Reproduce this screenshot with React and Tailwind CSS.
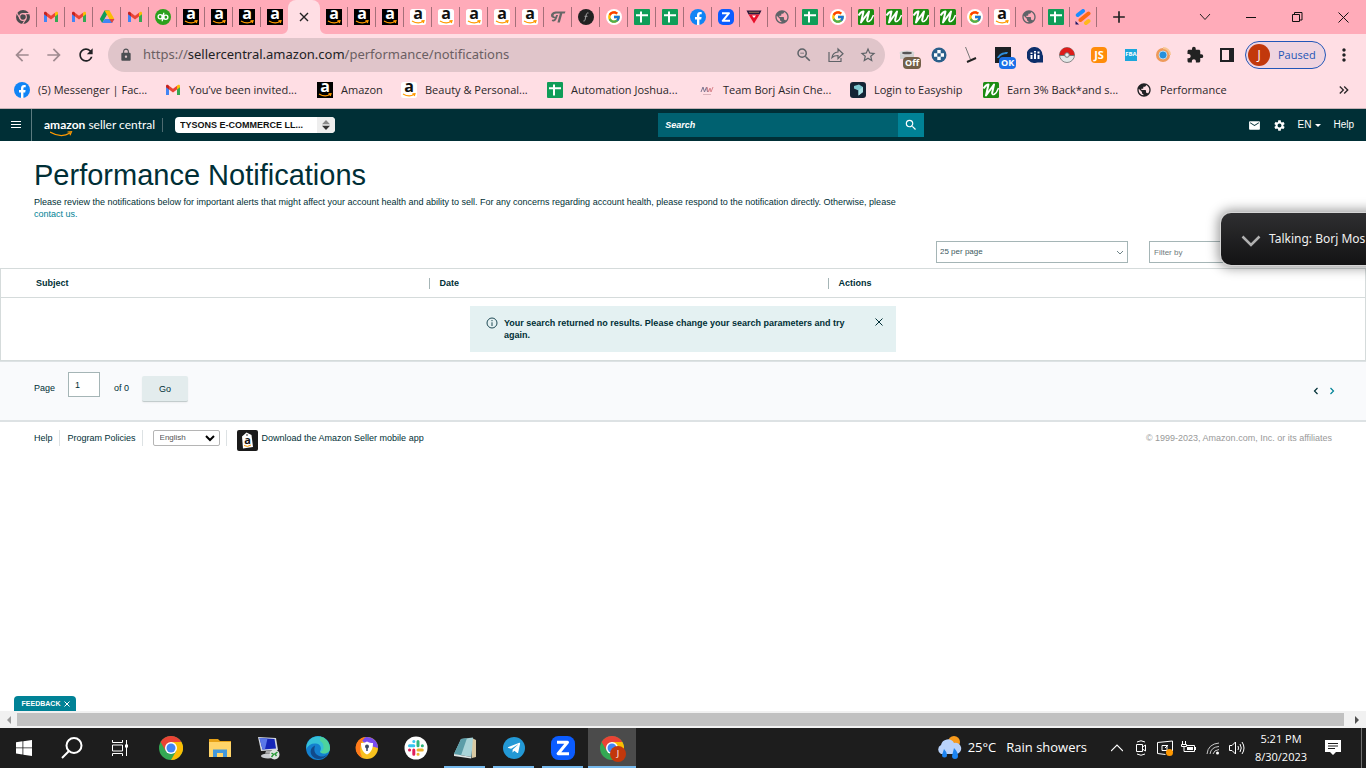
import React from 'react';
import { FcGoogle } from 'react-icons/fc';
import { FaTelegramPlane } from 'react-icons/fa';
import {
  MdLock,
  MdRefresh,
  MdArrowBack,
  MdArrowForward,
  MdStarBorder,
  MdExtension,
  MdMoreVert,
  MdSearch,
  MdSettings,
  MdEmail,
  MdAdd,
  MdPublic,
  MdOutlineZoomOut,
  MdKeyboardDoubleArrowRight,
} from 'react-icons/md';

/* ---------- Brand icons ---------- */

const AmazonIcon = ({ dark }) => (
  <svg viewBox="0 0 16 16" className="w-4 h-4 shrink-0 overflow-visible" aria-hidden="true">
    <rect width="16" height="16" rx={dark ? 0 : 2.5} fill={dark ? '#000' : '#fff'} />
    <text x="8" y="10.4" textAnchor="middle" fontSize="16" fontWeight="700" fontFamily="Open Sans" fill={dark ? '#fff' : '#111'}>
      a
    </text>
    <path d="M2 12q6 3.600 11 .6M11.400 11.800l2.600-.1-.7 2.300" fill="none" stroke="#f90" strokeWidth="1.200" />
  </svg>
);

const GmailIcon = () => (
  <svg viewBox="0 0 16 16" className="w-4 h-4 shrink-0" aria-hidden="true">
    <path d="M1 4v9h3V6.5z" fill="#4285f4" />
    <path d="M15 4v9h-3V6.5z" fill="#34a853" />
    <path d="M12 3.7v3.8l3-2.3V4c0-1.300-1.400-1.700-2.200-1z" fill="#fbbc04" />
    <path d="M1 4v1.200l3 2.300V3.700L3.200 3C2.400 2.300 1 2.700 1 4z" fill="#c5221f" />
    <path d="M4 3.700 8 6.700l4-3v3.800l-4 3-4-3z" fill="#ea4335" />
  </svg>
);

const DriveIcon = () => (
  <svg viewBox="0 0 16 16" className="w-4 h-4" aria-hidden="true">
    <path d="M5.500 1.500h5L8 5.800 3.200 14 .8 10z" fill="#0f9d58" />
    <path d="M5.500 1.500h5L15.300 10h-5z" fill="#fbbc04" />
    <path d="M5.700 10h9.600L13 14H3.200z" fill="#4285f4" />
    <path d="M10.300 10h5L13 14z" fill="#ea4335" />
    <path d="M8 6.200 10.200 10H5.800z" fill="#ffabb9" />
  </svg>
);

const QuickBooksIcon = () => (
  <svg viewBox="0 0 16 16" className="w-4 h-4" aria-hidden="true">
    <circle cx="8" cy="8" r="8" fill="#2ca01c" />
    <g fill="none" stroke="#fff" strokeWidth="1.300">
      <circle cx="5.200" cy="7.800" r="2.100" />
      <circle cx="10.800" cy="8.200" r="2.100" />
      <path d="M7.300 5.500v6.700M8.700 10.500V3.800" />
    </g>
  </svg>
);

const ChromeIcon = ({ size = 'w-4 h-4' }) => (
  <svg viewBox="0 0 24 24" className={size} aria-hidden="true">
    <circle cx="12" cy="12" r="12" fill="#34a853" />
    <path d="M1.600 6A12 12 0 0 1 22.400 6H12L6.800 15z" fill="#ea4335" />
    <path d="M22.400 6A12 12 0 0 1 12 24l5.200-9L12 6z" fill="#fbbc04" />
    <circle cx="12" cy="12" r="6" fill="#fff" />
    <circle cx="12" cy="12" r="4.500" fill="#4285f4" />
  </svg>
);

const ChromeGrayIcon = () => (
  <svg viewBox="0 0 24 24" className="w-4 h-4" aria-hidden="true">
    <circle cx="12" cy="12" r="10.500" fill="#4a4a4d" />
    <g stroke="#ffabb9" strokeWidth="1.700" fill="none">
      <circle cx="12" cy="12" r="5" />
      <path d="M12 7h10M7.700 14.500 2.700 6M16.300 14.500l-5 8.500" />
    </g>
    <circle cx="12" cy="12" r="3" fill="#4a4a4d" />
  </svg>
);

const SheetIcon = () => (
  <svg viewBox="0 0 16 16" className="w-4 h-4 shrink-0" aria-hidden="true">
    <rect width="16" height="16" rx="1" fill="#0f9d58" />
    <path d="M2 6.300h12M7 2.500v11" stroke="#fff" strokeWidth="2" />
  </svg>
);

const FacebookIcon = () => (
  <svg viewBox="0 0 16 16" className="w-4 h-4 shrink-0" aria-hidden="true">
    <circle cx="8" cy="8" r="8" fill="#1184f5" />
    <path d="M7 16v-5.500H5V8h2V6.300C7 4.200 8.200 3 10.100 3l1.600.1v2.100h-1.100c-.9 0-1.200.5-1.200 1.200V8h2.200l-.4 2.500H9.400V16z" fill="#fff" />
  </svg>
);

const ZoomIcon = ({ size = 'w-4 h-4' }) => (
  <svg viewBox="0 0 16 16" className={size} aria-hidden="true">
    <rect width="16" height="16" rx="5" fill="#0b5cff" />
    <path d="M4 4.200h7L4.700 11.800H12" fill="none" stroke="#fff" strokeWidth="2" strokeLinejoin="round" />
  </svg>
);

const GoogleTabIcon = () => (
  <span className="w-4 h-4 rounded-full bg-white flex items-center justify-center">
    <FcGoogle className="w-3.5 h-3.5" />
  </span>
);

const SwooshIcon = () => (
  <svg viewBox="0 0 16 16" className="w-4 h-4" aria-hidden="true">
    <path d="M7 2.500h8.500l-.8 2h-2.400l-2.500 9H7.400l2.500-9H6.500c-1.700 0-3 .8-3 2 0 1 .9 1.300 2 1.300l.6-1.800h2L6.800 9.500c-1 2.500-3 3.500-5 2.500l.4-1.500c1.200.5 2.200 0 2.700-1.200C2.700 9.300 1 8.300 1 6.500c0-2.500 2.600-4 6-4z" fill="#666" />
  </svg>
);

const CursiveIcon = () => (
  <svg viewBox="0 0 16 16" className="w-4 h-4" aria-hidden="true">
    <circle cx="8" cy="8" r="8" fill="#222" />
    <path d="M10.500 4c-1.400-.4-2 .6-2.300 2L7 11c-.3 1-1 1.300-1.600.9M6.500 7.300h3" fill="none" stroke="#aaa" strokeWidth=".9" />
  </svg>
);

const ShieldIcon = () => (
  <svg viewBox="0 0 16 16" className="w-4 h-4" aria-hidden="true">
    <path d="M.5 1.500h15l-2 4h-11z" fill="#2b1a3d" />
    <path d="M2.500 5.500h11L8 14.500z" fill="#e8102a" />
    <path d="M6 6.500h4L8 9z" fill="#fff" />
    <path d="M3 3.300h10" stroke="#b08a5a" strokeWidth=".8" />
  </svg>
);

const GreenNIcon = () => (
  <svg viewBox="0 0 16 16" className="w-4 h-4 shrink-0" aria-hidden="true">
    <rect width="16" height="16" rx="1.500" fill="#1c8c12" />
    <path d="M.5 6.500C2 4 3.500 2.500 5.500 2.500L3 13.500 11 2.500 9 11.500" fill="none" stroke="#fff" strokeWidth="2" strokeLinejoin="round" />
    <path d="M9 11c0 3 4 2 6.500-5" fill="none" stroke="#fff" strokeWidth="1.500" />
  </svg>
);

const JungleIcon = () => (
  <svg viewBox="0 0 16 16" className="w-4 h-4" aria-hidden="true">
    <g strokeLinecap="round" strokeWidth="4">
      <path d="M2.800 6 8 2" stroke="#1a8dff" />
      <path d="M5.500 11 13.500 4.500" stroke="#ff6a13" />
      <path d="M11 14 13.500 12" stroke="#ffb81c" />
    </g>
    <path d="M.5 12 4 15.500H.5z" fill="#1b1464" />
  </svg>
);

const GlobeIcon = ({ tone = 'text-[#5f6368]' }) => <MdPublic className={`w-4 h-4 shrink-0 ${tone}`} />;

const TeamIcon = () => (
  <svg viewBox="0 0 16 16" className="w-4 h-4 shrink-0" aria-hidden="true">
    <path d="M2 10 4 5l1.500 5L7.500 5l1 5" fill="none" stroke="#7d7590" strokeWidth="1" />
    <path d="m8 5 1.500 5L11 6l1 4 2-5" fill="none" stroke="#d9848c" strokeWidth="1" />
    <path d="M4 12.500h8" stroke="#dbb4bb" />
  </svg>
);

const EasyshipIcon = () => (
  <svg viewBox="0 0 16 16" className="w-4 h-4 shrink-0" aria-hidden="true">
    <rect width="16" height="16" rx="3" fill="#152536" />
    <path d="m4 4 5-1.500L13 5v5l-4.500 3.500V8.500L4 6.500z" fill="#7fc9d2" />
    <path d="m8.500 8.500 4.500-3.500v5l-4.500 3.500z" fill="#a9e0e4" />
  </svg>
);

/* ---------- Tab strip ---------- */

const A = () => <AmazonIcon dark />;
const W = () => <AmazonIcon />;

const tabsBefore = [ChromeGrayIcon, GmailIcon, GmailIcon, DriveIcon, GmailIcon, QuickBooksIcon, A, A, A, A];
const tabsAfter = [
  A, A, A, W, W, W, W, W, SwooshIcon, CursiveIcon, GoogleTabIcon, SheetIcon, SheetIcon, FacebookIcon,
  ZoomIcon, ShieldIcon, GlobeIcon, SheetIcon, GoogleTabIcon, GreenNIcon, GreenNIcon,
];
const tabsNarrow = [GreenNIcon, GreenNIcon, GoogleTabIcon, W, GlobeIcon, SheetIcon, JungleIcon];

const Tab = ({ icon: Icon, narrow, last }) => (
  <div className={`${narrow ? 'w-[27px]' : 'w-7'} h-5 flex items-center justify-center border-r ${last ? 'border-transparent' : 'border-[#a46f79]'}`}>
    <Icon />
  </div>
);

const TabStrip = () => (
  <div className="h-[34px] bg-[#ffabb9] flex items-center pl-[9px]">
    {tabsBefore.map((icon, i) => (
      <Tab key={i} icon={icon} last={i === tabsBefore.length - 1} />
    ))}
    <div className="relative w-8 h-full -ml-px bg-[#ffdee4] rounded-t-lg flex items-center justify-center">
      <svg viewBox="0 0 6 6" className="absolute -left-1.5 bottom-0 w-1.5 h-1.5" aria-hidden="true">
        <path d="M6 0v6H0a6 6 0 0 0 6-6z" fill="#ffdee4" />
      </svg>
      <svg viewBox="0 0 6 6" className="absolute -right-1.5 bottom-0 w-1.5 h-1.5" aria-hidden="true">
        <path d="M0 0v6h6a6 6 0 0 1-6-6z" fill="#ffdee4" />
      </svg>
      <button aria-label="Close tab">
        <svg viewBox="0 0 10 10" className="w-2.5 h-2.5" aria-hidden="true">
          <path d="m1 1 8 8M9 1 1 9" stroke="#222" strokeWidth="1.400" />
        </svg>
      </button>
    </div>
    {tabsAfter.map((icon, i) => (
      <Tab key={i} icon={icon} />
    ))}
    {tabsNarrow.map((icon, i) => (
      <Tab key={i} icon={icon} narrow />
    ))}
    <button aria-label="New tab" className="ml-3">
      <MdAdd className="w-5 h-5 text-[#222]" />
    </button>
    <div className="ml-auto h-7 flex items-center">
      <button aria-label="Search tabs" className="w-[46px] flex justify-center">
        <svg viewBox="0 0 12 12" className="w-3 h-3" fill="none" stroke="#222">
          <path d="m1 3 5 5.500L11 3" />
        </svg>
      </button>
      <button aria-label="Minimize" className="w-[46px] flex justify-center">
        <svg viewBox="0 0 10 10" className="w-2.5 h-2.5" stroke="#111">
          <path d="M0 5.500h10" />
        </svg>
      </button>
      <button aria-label="Restore" className="w-[46px] flex justify-center">
        <svg viewBox="0 0 11 11" className="w-[11px] h-[11px]" fill="none" stroke="#111">
          <path d="M.5 2.500h7v7h-7zM2.500 2.500v-2h7.500v7.500H7.500" />
        </svg>
      </button>
      <button aria-label="Close" className="w-[46px] flex justify-center">
        <svg viewBox="0 0 11 11" className="w-[11px] h-[11px]" fill="none" stroke="#111">
          <path d="m.5.5 10 10M10.500.5l-10 10" />
        </svg>
      </button>
    </div>
  </div>
);

/* ---------- Toolbar ---------- */

const extensions = [
  {
    name: 'Keepa off',
    icon: (
      <span className="relative w-4 h-4">
        <svg viewBox="0 0 16 16" className="w-4 h-4">
          <path d="M1 6h14v6H1z" fill="#cfd0d0" />
          <ellipse cx="8" cy="6" rx="7.500" ry="2.500" fill="#d8d8d8" />
          <ellipse cx="8" cy="6" rx="5" ry="1.300" fill="#555" />
        </svg>
        <span className="absolute left-1 top-2.5 h-3 px-0.5 rounded-sm bg-[#735f48] text-white text-[9px] leading-3 font-bold">Off</span>
      </span>
    ),
  },
  {
    name: 'Helper',
    icon: (
      <svg viewBox="0 0 16 16" className="w-4 h-4">
        <circle cx="8" cy="8" r="7.500" fill="#2a5f8a" />
        <path d="M6.300 3h3.400v3.300H13v3.400H9.700V13H6.300V9.700H3V6.300h3.300z" fill="#fff" />
        <path d="M6.300 6.300h3.400v3.400H6.300z" fill="#2a5f8a" />
      </svg>
    ),
  },
  {
    name: 'Broom',
    icon: (
      <svg viewBox="0 0 16 16" className="w-4 h-4" stroke="#222" fill="none">
        <path d="m2.500 0 5 12.500" stroke="#777" />
        <path d="m4 15 9-4" strokeWidth="2" />
      </svg>
    ),
  },
  {
    name: 'Rank OK',
    icon: (
      <span className="relative w-4 h-4">
        <svg viewBox="0 0 16 16" className="w-4 h-4">
          <path d="M0 0h16v16H0z" fill="#1c2024" />
          <path d="M2 11c2-4 5-6 11-6l-1 2c-4 0-6 1-8 4z" fill="#2f8ddb" />
        </svg>
        <span className="absolute left-1 top-2.5 h-3 px-0.5 rounded-sm bg-[#1a6fe8] text-white text-[9px] leading-3 font-bold">OK</span>
      </span>
    ),
  },
  {
    name: 'Stats',
    icon: (
      <svg viewBox="0 0 16 16" className="w-4 h-4">
        <path d="M8 0a8 8 0 1 1-1 16A8 8 0 0 1 8 0zm8 8v7.500h-6z" fill="#0d2f6b" />
        <path d="M3.500 8h2v4h-2zM7 6.500h2V12H7zM10.500 8h2v4h-2zM10.500 4.500h2v2h-2zM7 4h2v1.500H7zM3.500 5.500h2V7h-2z" fill="#fff" />
      </svg>
    ),
  },
  {
    name: 'Ball',
    icon: (
      <svg viewBox="0 0 16 16" className="w-4 h-4">
        <circle cx="8" cy="8" r="7.500" fill="#e3e8e8" stroke="#888" />
        <path d="M.5 8a7.500 7.500 0 0 1 15 0z" fill="#dd1c1a" />
        <path d="M.5 8.500h15" stroke="#777" />
        <circle cx="8" cy="8" r="2.300" fill="#eee" stroke="#777" />
      </svg>
    ),
  },
  {
    name: 'Scout',
    icon: <span className="w-4 h-4 rounded-sm bg-[#ff8c0a] text-white text-[11px] leading-4 font-bold text-center">JS</span>,
  },
  {
    name: 'FBA',
    icon: <span className="w-3 h-3 bg-[#1ba7dc] text-white text-[6px] leading-[11px] font-bold text-center">FBA</span>,
  },
  {
    name: 'Donut',
    icon: (
      <svg viewBox="0 0 16 16" className="w-4 h-4">
        <circle cx="8" cy="8" r="7" fill="#ee9a5a" />
        <path d="M8 1a7 7 0 0 1 7 7" fill="none" stroke="#f7c693" strokeWidth="2" />
        <circle cx="8" cy="8" r="4" fill="#2590dc" stroke="#b9d9ee" />
      </svg>
    ),
  },
  { name: 'Extensions', icon: <MdExtension className="w-[18px] h-[18px] text-[#222]" /> },
  {
    name: 'Side panel',
    icon: (
      <svg viewBox="0 0 14 14" className="w-3.5 h-3.5">
        <path d="M0 0h14v14H0z" fill="#202124" />
        <path d="M2 2h7v10H2z" fill="#ffdee4" />
      </svg>
    ),
  },
];

const Toolbar = () => (
  <div className="h-[42px] bg-[#ffdee4] flex items-center text-[#202124]">
    <div className="flex pl-1.5">
      <button aria-label="Back" className="w-8 flex justify-center">
        <MdArrowBack className="w-5 h-5 text-[#a08b90]" />
      </button>
      <button aria-label="Forward" className="w-8 flex justify-center">
        <MdArrowForward className="w-5 h-5 text-[#a08b90]" />
      </button>
      <button aria-label="Reload" className="w-8 flex justify-center">
        <MdRefresh className="w-5 h-5" />
      </button>
    </div>
    <div className="ml-1.5 flex-1 h-[34px] rounded-full bg-[#e0c5ca] flex items-center pl-[11px] pr-2 text-[#5f6368]">
      <MdLock className="w-3.5 h-3.5 mr-2.5 text-[#4c4f53]" />
      <a href="#" className="text-[13px] font-['Noto_Sans',sans-serif] text-[#6b5f63]">
        https://<span className="text-[#202124]">sellercentral.amazon.com</span>/performance/notifications
      </a>
      <div className="ml-auto flex gap-3.5">
        <MdOutlineZoomOut className="w-[18px] h-[18px]" />
        <svg viewBox="0 0 18 18" className="w-[18px] h-[18px]" fill="none" stroke="currentColor" strokeWidth="1.200" aria-hidden="true">
          <path d="M2 6v9.500h12V12M5 11.500c.5-3.500 2.500-5.300 6-5.500V3l5 4.800-5 4.700V9.500c-2.500 0-4.500.5-6 2z" />
        </svg>
        <MdStarBorder className="w-[18px] h-[18px]" />
      </div>
    </div>
    <div className="ml-1.5 flex">
      {extensions.map((ext) => (
        <button key={ext.name} aria-label={ext.name} className="w-8 h-7 flex items-center justify-center">
          {ext.icon}
        </button>
      ))}
    </div>
    <button className="ml-0.5 h-7 w-[81px] pl-0.5 rounded-full border border-[#2156b8] bg-[#efd4e0] flex items-center text-[11px] text-[#1e55b5]">
      <span className="w-[22px] h-[22px] mr-2 rounded-full bg-[#c2380b] text-white text-xs leading-[22px] text-center">J</span>
      Paused
    </button>
    <button aria-label="Menu" className="w-9 mr-1 flex justify-center">
      <MdMoreVert className="w-5 h-5" />
    </button>
  </div>
);

/* ---------- Bookmarks ---------- */

const bookmarks = [
  { label: '(5) Messenger | Fac...', icon: <FacebookIcon />, width: 'w-[151px]' },
  { label: 'You’ve been invited...', icon: <GmailIcon />, width: 'w-[152px]' },
  { label: 'Amazon', icon: <AmazonIcon dark />, width: 'w-[84px]' },
  { label: 'Beauty & Personal...', icon: <AmazonIcon />, width: 'w-[146px]' },
  { label: 'Automation Joshua...', icon: <SheetIcon />, width: 'w-[152px]' },
  { label: 'Team Borj Asin Che...', icon: <TeamIcon />, width: 'w-[151px]' },
  { label: 'Login to Easyship', icon: <EasyshipIcon />, width: 'w-[133px]' },
  { label: 'Earn 3% Back*and s...', icon: <GreenNIcon />, width: 'w-[153px]' },
  { label: 'Performance', icon: <GlobeIcon tone="text-[#202124]" />, width: 'w-[120px]' },
];

const BookmarksBar = () => (
  <div className="h-[33px] bg-[#ffdee4] border-b border-[#c5b1b5] flex items-center pl-3.5 pb-1 text-[11px] text-[#2b2729]">
    {bookmarks.map((b) => (
      <a key={b.label} href="#" className={`${b.width} flex items-center gap-2 whitespace-nowrap shrink-0`}>
        {b.icon}
        {b.label}
      </a>
    ))}
    <button aria-label="More bookmarks" className="ml-auto mr-3.5">
      <MdKeyboardDoubleArrowRight className="w-4 h-4" />
    </button>
  </div>
);

/* ---------- Seller Central ---------- */

const SellerHeader = () => (
  <header className="h-8 bg-[#002f36] flex items-center justify-between text-white">
    <div className="flex items-center">
      <button aria-label="Open menu" className="w-8 h-8 border-r border-[#5c7b80] flex items-center justify-center">
        <svg viewBox="0 0 10 8" className="w-2.5 h-2" stroke="#fff">
          <path d="M0 .5h10M0 3.500h10M0 6.500h10" />
        </svg>
      </button>
      <a href="#" className="relative ml-3 w-[106px] h-5 text-xs leading-5 whitespace-nowrap font-['Lato',sans-serif]">
        <span className="font-bold">amazon</span> seller central
        <svg viewBox="0 0 24 6" className="absolute left-1.5 -bottom-0.5 w-6 h-1.5" aria-hidden="true">
          <path d="M0 1q11 6.500 20 1M17.500 1l4-.3-1.500 3.500" fill="none" stroke="#f90" strokeWidth="1.200" />
        </svg>
      </a>
      <span className="w-px h-3.5 ml-3 bg-[#4e6b70]" />
      <div className="relative ml-3 w-40 h-4">
        <select
          aria-label="Account"
          className="block w-full h-4 pl-[5px] pr-5 appearance-none rounded-sm bg-white text-[#111] text-[9px] leading-4 font-bold font-['Liberation_Sans',Arial,sans-serif]"
        >
          <option>TYSONS E-COMMERCE LL...</option>
        </select>
        <span className="absolute right-0 top-0 w-[18px] h-4 rounded-r-sm bg-[#eee] flex items-center justify-center pointer-events-none">
          <svg viewBox="0 0 8 10" className="w-2 h-2.5">
            <path d="M0 4.200 4 0l4 4.200z" fill="#888" />
            <path d="M0 5.800 4 10l4-4.200z" fill="#333" />
          </svg>
        </span>
      </div>
    </div>
    <form className="flex h-6" onSubmit={(e) => e.preventDefault()}>
      <input
        type="search"
        aria-label="Search"
        placeholder="Search"
        className="w-60 px-[7px] bg-[#006170] text-[9px] italic font-bold text-white placeholder:text-white"
      />
      <button aria-label="Search" className="w-[26px] bg-[#008296] flex items-center justify-center">
        <MdSearch className="w-3.5 h-3.5" />
      </button>
    </form>
    <nav className="flex items-center pr-3 text-[10px]">
      <a href="#" aria-label="Messages">
        <MdEmail className="w-[13px] h-[13px]" />
      </a>
      <a href="#" aria-label="Settings" className="ml-3">
        <MdSettings className="w-[13px] h-[13px]" />
      </a>
      <button className="ml-3 flex items-center gap-1">
        EN
        <svg viewBox="0 0 6 3" className="w-1.5 h-[3px]">
          <path d="M0 0h6L3 3z" fill="#fff" />
        </svg>
      </button>
      <a href="#" className="ml-3">
        Help
      </a>
    </nav>
  </header>
);

const Filters = () => (
  <div className="mt-[21px] flex justify-end gap-[21px] pr-[25px]">
    <div className="relative">
      <select
        aria-label="Results per page"
        className="block w-48 h-[22px] pl-[3px] appearance-none bg-white border border-[#a5b5b6] text-[8px] text-[#3d5a60]"
      >
        <option>25 per page</option>
      </select>
      <svg viewBox="0 0 8 6" className="absolute right-1 top-[9px] w-2 h-1.5 pointer-events-none" fill="none" stroke="#6f8488">
        <path d="m1 1 3 3 3-3" />
      </svg>
    </div>
    <input
      type="text"
      aria-label="Filter by"
      placeholder="Filter by"
      className="w-48 h-[22px] px-1 bg-white border border-[#a5b5b6] text-[8px] placeholder:text-[#6f7b7d]"
    />
  </div>
);

const NotificationsTable = () => (
  <table className="mt-[5px] w-full table-fixed border border-[#d5dbdb]">
    <thead>
      <tr className="h-[29px] border-b border-[#d5dbdb] text-left">
        <th className="w-[428px] pl-[35px]">Subject</th>
        <th className="w-[399px]">
          <span className="block border-l border-[#a5b5b6] pl-2.5 leading-[11px]">Date</span>
        </th>
        <th>
          <span className="block border-l border-[#a5b5b6] pl-2.5 leading-[11px]">Actions</span>
        </th>
      </tr>
    </thead>
    <tbody>
      <tr>
        <td colSpan={3} className="py-2">
          <div role="alert" className="mx-auto w-[426px] h-[46px] bg-[#e4f1f2] flex items-start pt-[11px] pl-4 pr-3 font-bold">
            <svg viewBox="0 0 12 12" className="w-3 h-3 mr-1.5 shrink-0" fill="none" stroke="#1f4a55">
              <circle cx="6" cy="6" r="5" />
              <path d="M6 5.300V9M6 3v1.200" />
            </svg>
            <p className="flex-1">
              Your search returned no results. Please change your search parameters and try again.
            </p>
            <button aria-label="Dismiss" className="ml-3 shrink-0">
              <svg viewBox="0 0 10 10" className="w-2.5 h-2.5" stroke="#002f36">
                <path d="m1.500 1.500 7 7M8.500 1.500l-7 7" />
              </svg>
            </button>
          </div>
        </td>
      </tr>
    </tbody>
  </table>
);

const Pager = () => (
  <div className="h-[61px] border-t border-b-2 border-[#dde2e4] bg-[#f9fafc] flex items-start pt-2.5 pl-[34px] pr-[30px]">
    <label htmlFor="page" className="mt-2.5">Page</label>
    <input
      id="page"
      type="text"
      defaultValue="1"
      className="ml-[13px] w-8 h-[25px] pl-1.5 bg-white border border-[#a5b5b6] text-[9px]"
    />
    <span className="ml-3.5 mt-2.5">of 0</span>
    <button className="ml-[13px] mt-1 w-[46px] h-[26px] rounded-xs bg-[#e3eced] border-b border-[#c3cccd] shadow-xs">Go</button>
    <div className="ml-auto mt-3.5 flex gap-2">
      <button aria-label="Previous page">
        <svg viewBox="0 0 8 10" className="w-2 h-2.5" fill="none" stroke="#002f36" strokeWidth="1.200">
          <path d="M5.500 2 2.500 5l3 3" />
        </svg>
      </button>
      <button aria-label="Next page">
        <svg viewBox="0 0 8 10" className="w-2 h-2.5" fill="none" stroke="#008296" strokeWidth="1.200">
          <path d="m2.500 2 3 3-3 3" />
        </svg>
      </button>
    </div>
  </div>
);

const SellerFooter = () => (
  <footer className="flex items-start pt-2 px-[34px] leading-4">
    <a href="#" className="pr-1.5 border-r border-[#dde2e4]">Help</a>
    <a href="#" className="pl-2 pr-1.5 border-r border-[#dde2e4]">Program Policies</a>
    <div className="relative ml-2.5">
      <select aria-label="Language" className="block w-[67px] h-4 pl-1.5 appearance-none rounded-xs border border-[#b5b5b5] bg-white text-[8px] leading-3 text-[#555]">
        <option>English</option>
      </select>
      <svg viewBox="0 0 10 7" className="absolute right-[5px] top-[5px] w-2.5 h-[7px] pointer-events-none" fill="none" stroke="#000" strokeWidth="2">
        <path d="m1 1 4 4 4-4" />
      </svg>
    </div>
    <span className="w-px h-4 ml-1.5 bg-[#dde2e4]" />
    <a href="#" className="ml-2.5 flex items-start gap-1">
      <svg viewBox="0 0 21 21" className="w-[21px] h-[21px]" aria-hidden="true">
        <rect width="21" height="21" rx="2" fill="#1a1a1a" />
        <path d="m5 6.500 4.500-4L14.500 5 16 17 6 18.500z" fill="#fff" />
        <circle cx="10" cy="5" r=".8" fill="#1a1a1a" />
        <text x="10.500" y="14" textAnchor="middle" fontSize="11" fontWeight="700" fontFamily="Open Sans" fill="#111">
          a
        </text>
        <path d="M7 15.500q3.500 2 7-.5" fill="none" stroke="#f90" />
      </svg>
      Download the Amazon Seller mobile app
    </a>
    <p className="ml-auto text-[#999]">© 1999-2023, Amazon.com, Inc. or its affiliates</p>
  </footer>
);

const TalkingOverlay = () => (
  <div className="absolute left-[1221px] top-[213px] w-60 h-[52px] rounded-[10px] bg-linear-to-b from-[#2f2f31] to-[#131314] shadow-[0_0_0_1px_#d5d5d5,0_0_12px_3px_rgba(0,0,0,0.4)] flex items-center pl-5 gap-2 text-xs text-[#f0f0f0] whitespace-nowrap font-['Noto_Sans',sans-serif]">
    <svg viewBox="0 0 20 12" className="w-5 h-3 mt-1" fill="none" stroke="#b0b0b0" strokeWidth="2.500" aria-hidden="true">
      <path d="m1.500 1.500 8.500 8.500 8.500-8.500" />
    </svg>
    Talking: Borj Mos
  </div>
);

const Scrollbar = () => (
  <div className="h-[17px] bg-[#f1f1f1] flex items-center">
    <span className="w-[17px] flex justify-center">
      <svg viewBox="0 0 4 8" className="w-1 h-2"><path d="M4 0v8L0 4z" fill="#999" /></svg>
    </span>
    <span className="flex-1 h-[13px] bg-[#c1c1c1]" />
    <span className="w-[22px] flex justify-center pl-1">
      <svg viewBox="0 0 4 8" className="w-1 h-2"><path d="M0 0v8l4-4z" fill="#505050" /></svg>
    </span>
  </div>
);

/* ---------- Windows taskbar ---------- */

const taskbarApps = [
  { name: 'Chrome', icon: <ChromeIcon size="w-6 h-6" /> },
  {
    name: 'File Explorer',
    icon: (
      <svg viewBox="0 0 24 24" className="w-6 h-6">
        <path d="M1 3h9l2 2h11v5H1z" fill="#e6a117" />
        <path d="M1 6h22v15H1z" fill="#ffd469" />
        <path d="M5 21v-7.500h14V21h-4v-4H9v4z" fill="#4298dc" />
      </svg>
    ),
  },
  {
    name: 'Remote PC',
    icon: (
      <svg viewBox="0 0 24 24" className="w-6 h-6">
        <path d="m1 1 18 1 2 12L4 15z" fill="#d4d8e0" />
        <path d="m2.500 2 15 1L19 12.500 5.500 13.500z" fill="#1526b8" />
        <path d="m2.500 2 8 .5L8 13.300l-2.500.2z" fill="#5a78e8" />
        <path d="m9 15 5-.5 1 3H8z" fill="#aaa" />
        <ellipse cx="11" cy="20" rx="7" ry="2.500" fill="#c9ccd0" />
        <circle cx="17.500" cy="18.500" r="5" fill="#dfe3e0" />
        <path d="m14.500 17 2 1.500-2 2.500m6-5-2.500 2 1.500 2" fill="none" stroke="#2a9a38" strokeWidth="1.500" />
      </svg>
    ),
  },
  {
    name: 'Edge',
    icon: (
      <svg viewBox="0 0 24 24" className="w-6 h-6">
        <circle cx="12" cy="12" r="12" fill="#1480cf" />
        <path d="M.8 8A12 12 0 0 1 24 12c0 4-3 5.500-6 5.500-2.500 0-4.500-1-3.800-2.500 1.800-3 .3-7-4.200-7.500C6 7 2 9 .3 13z" fill="#35c1d8" />
        <path d="M14 0.500A12 12 0 0 1 24 12c0 4-3 5.500-6 5.500-2 0-3.500-.6-3.800-1.500 4-1 5-8 0-11z" fill="#57d88a" opacity=".75" />
        <path d="M8.500 12c-1 5 3 9 9 8.500l4-2C17 24 9 25 5.500 19 3.500 15 5 11.500 9 9.500z" fill="#114a8b" />
      </svg>
    ),
  },
  {
    name: 'Browser',
    icon: (
      <svg viewBox="0 0 24 24" className="w-6 h-6">
        <circle cx="12" cy="12" r="11" fill="#f7c21e" />
        <path d="M11 1a11 11 0 0 1 12 11L12 9 6 4z" fill="#7a4cf0" />
        <path d="M10 1A11 11 0 0 0 8 22.300C4 17 4 8 10 1z" fill="#ff7a1a" />
        <path d="M12 5.500c2 1.300 4 1.500 6 1.500 0 6-2 9.500-6 11.500C8 16.500 6 13 6 7c2 0 4-.2 6-1.500z" fill="#fff" />
        <circle cx="12" cy="10.500" r="2" fill="#3d4a66" />
        <path d="M11.200 11h1.600v4h-1.600z" fill="#3d4a66" />
      </svg>
    ),
  },
  {
    name: 'Slack',
    icon: (
      <svg viewBox="0 0 24 24" className="w-6 h-6">
        <circle cx="12" cy="12" r="11.500" fill="#fff" />
        <g strokeWidth="3" strokeLinecap="round">
          <path d="M5.500 9.800h4.300M9.800 5.500h.1" stroke="#36c5f0" />
          <path d="M14 5.500v4.300M18.300 9.800h.1" stroke="#2eb67d" />
          <path d="M14 14h4.300M14 18.300h.1" stroke="#ecb22e" />
          <path d="M9.800 14v4.300M5.500 14h.1" stroke="#e01e5a" />
        </g>
      </svg>
    ),
  },
  {
    name: 'Notepad',
    running: true,
    icon: (
      <svg viewBox="0 0 24 24" className="w-6 h-6">
        <path d="m19 2 4 2v17l-4 1z" fill="#d8c9a3" />
        <path d="M8 3 20 1.500 18.500 21 1 18z" fill="#a9d4d8" />
        <path d="M8 3 14 2 8 19.500 1 18z" fill="#5b9da8" />
        <path d="M1 18 18.500 21l-.3 1.500L1 20z" fill="#dfe6e6" />
      </svg>
    ),
  },
  {
    name: 'Telegram',
    running: true,
    icon: (
      <span className="w-[22px] h-[22px] rounded-full bg-[#2399d6] flex items-center justify-center">
        <FaTelegramPlane className="w-3.5 h-3.5 text-white" />
      </span>
    ),
  },
  { name: 'Zoom', running: true, icon: <ZoomIcon size="w-6 h-6" /> },
];

const Taskbar = () => (
  <footer className="h-10 bg-[#1d1d1d] flex text-white font-['Open_Sans',sans-serif]">
    <button aria-label="Start" className="w-12 flex items-center justify-center">
      <svg viewBox="0 0 16 16" className="w-4 h-4" fill="#fff">
        <path d="m0 2.200 6.500-.9v6.200H0zM7.300 1.200 16 0v7.500H7.300zM0 8.300h6.500v6.200L0 13.600zM7.300 8.300H16V16l-8.700-1.200z" />
      </svg>
    </button>
    <button aria-label="Search" className="w-12 flex items-center justify-center">
      <svg viewBox="0 0 22 22" className="w-[22px] h-[22px]" fill="none" stroke="#fff" strokeWidth="2">
        <circle cx="13" cy="8.500" r="7.500" />
        <path d="m8 14-7 7" />
      </svg>
    </button>
    <button aria-label="Task view" className="w-12 mr-0.5 flex items-center justify-center">
      <svg viewBox="0 0 16 16" className="w-4 h-4" fill="none" stroke="#fff">
        <path d="M.5 0v2.500h10V0M.5 5h10v6H.5zM.5 16v-2.500h10V16M14.500 0v16" />
        <path d="M13 4.500h3v3h-3z" fill="#fff" stroke="none" />
      </svg>
    </button>
    {taskbarApps.map((app) => (
      <button key={app.name} aria-label={app.name} className="relative w-[49px] flex items-center justify-center">
        {app.icon}
        {app.running && <span className="absolute bottom-0 inset-x-1 h-0.5 bg-[#76b9ed]" />}
      </button>
    ))}
    <button aria-label="Chrome profile" className="relative ml-px w-12 bg-[#4b4b4b] flex items-center justify-center">
      <ChromeIcon size="w-6 h-6" />
      <span className="absolute left-[22px] top-[18px] w-4 h-4 rounded-full bg-[#c2380b] text-[9px] leading-4 text-center">J</span>
      <span className="absolute bottom-0 inset-x-0 h-0.5 bg-[#76b9ed]" />
    </button>
    <div className="ml-auto flex items-center">
      <button className="flex items-center text-[13px] whitespace-nowrap">
        <svg viewBox="0 0 26 24" className="w-[26px] h-6 mr-1.5" aria-hidden="true">
          <circle cx="18" cy="6" r="6" fill="#f79a1c" />
          <path d="M5 18a5 5 0 0 1 0-9 7 7 0 0 1 13-2 5.500 5.500 0 0 1 3 11z" fill="#b9d3fb" />
          <path d="M8 13q3 3 3 6a2.500 2.500 0 0 1-5 0zM18 12q4 4 4 8a3 3 0 0 1-6 0z" fill="#1b84f2" />
        </svg>
        25°C
        <span className="ml-2.5">Rain showers</span>
      </button>
      <div className="ml-6 flex items-center gap-2">
        <svg viewBox="0 0 12 12" className="w-3 h-3 mr-0.5" fill="none" stroke="#fff" strokeWidth="1.200">
          <path d="m0 9 6-6 6 6" />
        </svg>
        <svg viewBox="0 0 16 16" className="w-4 h-4" fill="none" stroke="#fff">
          <path d="M3.500 4.500h6v7h-6zM9.500 7l3-2v6l-3-2M4 2q4-2.500 8 0M4 14q4 2.500 8 0" />
        </svg>
        <svg viewBox="0 0 16 16" className="w-4 h-4" fill="none" stroke="#fff">
          <path d="M.5 2.500 15.500 1v10M.5 2.500v11l8 1M5 5.500h5v5H5zM8 8l3-3" />
          <circle cx="12.500" cy="12.500" r="3.500" fill="#ff9800" stroke="none" />
        </svg>
        <svg viewBox="0 0 16 16" className="w-4 h-4" fill="none" stroke="#fff">
          <path d="M5.500 5.500h8v6h-8M14.500 7v3M1.500 1v3M4.500 1v3M.5 4.500h5v2h-5zM3 7v4.500h3" />
          <path d="M6 7h6v3H6z" fill="#fff" stroke="none" />
        </svg>
        <svg viewBox="0 0 16 16" className="w-4 h-4" fill="none" stroke="#fff">
          <path d="M2 14Q3 4 14 3M5 14q1-7 9-7.500M8 14q1-4 6-4.500" stroke="#ccc" />
          <circle cx="12.500" cy="13" r="1.500" fill="#fff" stroke="none" />
        </svg>
        <svg viewBox="0 0 16 16" className="w-4 h-4" fill="none" stroke="#fff">
          <path d="M.5 5.500H3L6.500 2v12L3 10.500H.5zM9 6q1 2 0 4M11 4q2.500 4 0 8M13 2q4 6 0 12" />
        </svg>
      </div>
      <div className="ml-2 w-14 text-[11px] leading-[18px] text-center whitespace-nowrap">
        5:21 PM
        <br />
        8/30/2023
      </div>
      <button aria-label="Notifications" className="ml-4 mr-5">
        <svg viewBox="0 0 16 16" className="w-4 h-4">
          <path d="M0 0h16v12h-5l-3 3-3-3H0z" fill="#fff" />
          <path d="M3 3.500h10M3 6h10M3 8.500h7" stroke="#1d1d1d" />
        </svg>
      </button>
      <span className="w-px h-10 mr-1 bg-[#707070]" />
    </div>
  </footer>
);

const App = () => {
  return (
    <div className="relative h-screen overflow-hidden flex flex-col bg-white font-['Open_Sans',sans-serif]">
      <TabStrip />
      <Toolbar />
      <BookmarksBar />
      <div className="flex-1 min-h-0 flex flex-col text-[9px] leading-3 text-[#002f36] font-['Liberation_Sans',Arial,sans-serif]">
        <SellerHeader />
        <main>
          <div className="pt-4 px-[34px]">
            <h1 className="text-[29px] leading-9">Performance Notifications</h1>
            <p className="mt-[3px] max-w-[880px]">
              Please review the notifications below for important alerts that might affect your account health and ability to
              sell. For any concerns regarding account health, please respond to the notification directly. Otherwise, please{' '}
              <a href="#" className="text-[#008296]">
                contact us.
              </a>
            </p>
          </div>
          <Filters />
          <NotificationsTable />
          <Pager />
        </main>
        <SellerFooter />
        <button className="mt-auto ml-3.5 w-[62px] h-[15px] pl-0.5 rounded-t-sm bg-[#008296] text-white text-[7px] font-bold flex items-center justify-center gap-1">
          FEEDBACK
          <svg viewBox="0 0 6 6" className="w-1.5 h-1.5" stroke="#fff" aria-hidden="true">
            <path d="m.5.5 5 5M5.500.5l-5 5" />
          </svg>
        </button>
      </div>
      <Scrollbar />
      <Taskbar />
      <TalkingOverlay />
    </div>
  );
};

export default App;
